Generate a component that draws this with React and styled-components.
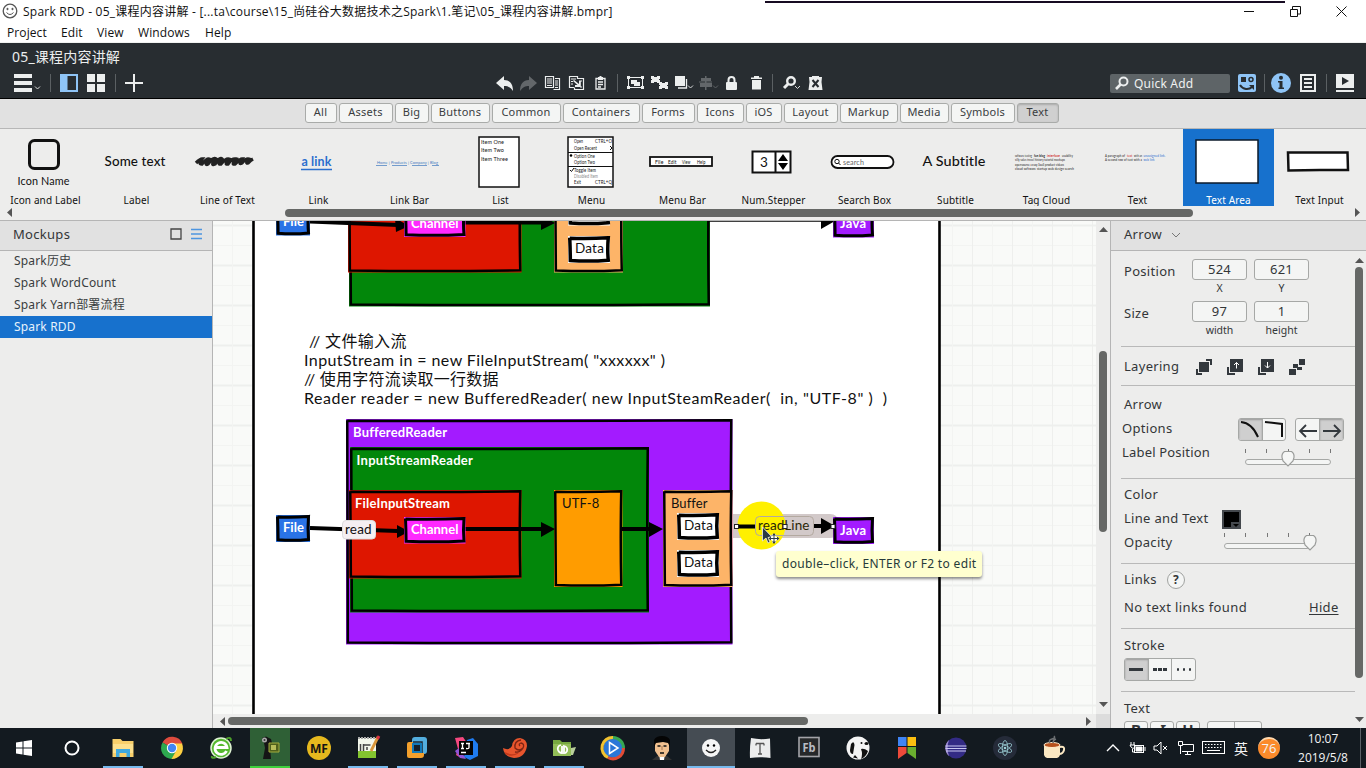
import React from "react";
import styled, { createGlobalStyle, css } from "styled-components";

const UI = `"Noto Sans", "Noto Sans CJK SC", sans-serif`;
const SEGOE = `"Open Sans", "Noto Sans CJK SC", sans-serif`;
const SKETCH = `"Lato", "Noto Sans CJK SC", sans-serif`;

const Global = createGlobalStyle`
  * { box-sizing: border-box; }
  body { margin: 0; background: #fff; overflow: hidden; }
  svg { display: block; flex: none; overflow: visible; }
`;

const Window = styled.div`
  width: 1366px;
  height: 768px;
  display: flex;
  flex-direction: column;
  overflow: hidden;
  font-family: ${UI};
  font-size: 12px;
  color: #333638;
  white-space: pre;
`;

/* ---------- window chrome ---------- */
const TitleBar = styled.header`
  position: relative;
  height: 22px;
  flex: none;
  display: flex;
  align-items: center;
  padding: 0 19px 0 2px;
  background: #fff;
  font-family: ${SEGOE};
  font-size: 12px;
  color: #111;
`;
const TitleText = styled.span`
  margin-left: 5px;
  flex: 1;
  letter-spacing: 0.23px;
`;
const TopEdge = styled.div`
  position: absolute;
  left: 765px;
  top: 1px;
  width: 520px;
  height: 2px;
  background: #170b22;
`;
const WinButtons = styled.div`
  display: flex;
  gap: 35px;
`;
const MenuBar = styled.nav`
  height: 21px;
  flex: none;
  display: flex;
  gap: 14px;
  padding-left: 7px;
  line-height: 21px;
  background: #fff;
  border-bottom: 1px solid #f0f2f0;
  font-family: ${SEGOE};
  font-size: 12px;
  letter-spacing: 0.1px;
  color: #111;
`;
const MenuItem = styled.span`
  width: ${(p) => p.$w}px;
`;

/* ---------- dark header ---------- */
const Header = styled.div`
  height: 56px;
  flex: none;
  background: #282d31;
  border-bottom: 1px solid #000;
  color: #eceeee;
`;
const ProjectName = styled.div`
  height: 29px;
  padding-left: 12px;
  line-height: 28px;
  font-size: 14px;
  letter-spacing: 0.2px;
`;
const ToolRow = styled.div`
  display: grid;
  grid-template-columns: 496px 614px 1fr;
  height: 22px;
  align-items: center;
`;
const Tools = styled.div`
  display: flex;
  align-items: center;
  padding-left: ${(p) => p.$pad || 0}px;
`;
const Slot = styled.div`
  width: ${(p) => p.$w}px;
  flex: none;
  opacity: ${(p) => (p.$dim ? 0.3 : 1)};
`;
const Sep = styled.div`
  width: 1px;
  height: 18px;
  background: #5b6063;
  margin-right: ${(p) => p.$mr}px;
`;
const QuickAdd = styled.div`
  width: 120px;
  height: 19px;
  display: flex;
  align-items: center;
  gap: 5px;
  padding-left: 5px;
  margin-right: 8px;
  border-radius: 2px;
  background: #5e6467;
  color: #f0f1f1;
  font-size: 12px;
  letter-spacing: 0.2px;
`;

/* ---------- library ---------- */
const Categories = styled.div`
  height: 30px;
  flex: none;
  display: flex;
  justify-content: center;
  gap: 2px;
  padding: 4px 2px 0 0;
  background: #e1e1e1;
  border-bottom: 1px solid #b7b7b7;
`;
const Category = styled.button`
  width: ${(p) => p.$w}px;
  height: 20px;
  padding: 0 1px 2px 0;
  border: 1px solid #a9aba9;
  border-radius: 3px;
  background: ${(p) => (p.$on ? "#d0d0d0" : "#f4f5f4")};
  box-shadow: ${(p) => (p.$on ? "inset 0 1px 2px #aaa" : "none")};
  font: 11px/16px ${UI};
  letter-spacing: 0.25px;
  color: #3a3d3f;
`;
const Library = styled.div`
  height: 77px;
  flex: none;
  display: flex;
  background: #ededec;
`;
const LibraryItem = styled.div`
  width: 91px;
  height: 77px;
  flex: none;
  display: flex;
  flex-direction: column;
  align-items: center;
  background: ${(p) => (p.$on ? "#1771cd" : "none")};
  color: ${(p) => (p.$on ? "#fff" : "#111")};
  font-size: 10px;
  line-height: 12px;
  letter-spacing: 0.12px;
`;
const Thumb = styled.div`
  height: 66px;
  display: flex;
  align-items: center;
  margin-left: -3px;
`;
const LibraryScroll = styled.div`
  height: 15px;
  flex: none;
  display: flex;
  align-items: center;
  padding: 0 6px 1px 6px;
  background: #ededec;
  border-bottom: 1px solid #b5b5b5;
`;
const Bar = styled.div`
  flex: none;
  border-radius: 4px;
  background: #666866;
  width: ${(p) => p.$w}px;
  height: ${(p) => p.$h}px;
  margin: ${(p) => p.$m || 0};
`;

/* ---------- workspace ---------- */
const Workspace = styled.div`
  height: 507px;
  flex: none;
  display: flex;
  background: #ededec;
`;
const Sidebar = styled.aside`
  width: 213px;
  border-right: 1px solid #b5b5b5;
`;
const PaneHead = styled.div`
  height: 30px;
  display: flex;
  align-items: center;
  padding: 0 10px 3px 13px;
  background: #e1e1e1;
  border-bottom: 1px solid #b5b5b5;
  font-size: 13px;
  letter-spacing: 0.3px;
  gap: 9px;
`;
const Grow = styled.span`
  flex: 1;
`;
const MockupRow = styled.div`
  height: 22px;
  margin-top: ${(p) => (p.$first ? -1 : 0)}px;
  padding-left: 14px;
  line-height: 22px;
  font-size: 12px;
  letter-spacing: 0.17px;
  background: ${(p) => (p.$on ? "#1771cd" : "none")};
  color: ${(p) => (p.$on ? "#e6f1fb" : "#3a3d40")};
`;
const CanvasPane = styled.main`
  width: 897px;
  display: grid;
  grid-template: 493px 14px / 883px 14px;
`;
const Canvas = styled.div`
  position: relative;
  overflow: hidden;
  background: #f9faf8;
`;
/* The board keeps document coordinates; the canvas shows a scrolled window of it. */
const Board = styled.div`
  position: absolute;
  left: -213px;
  top: -221px;
  width: 1366px;
  height: 768px;
`;
const Layer = styled.svg`
  position: absolute;
  left: 0;
  top: 0;
`;
const NodeBox = styled.div`
  position: absolute;
  left: ${(p) => p.$x}px;
  top: ${(p) => p.$y}px;
  width: ${(p) => p.$w}px;
  height: ${(p) => p.$h}px;
`;
const NodeText = styled.span`
  position: absolute;
  left: ${(p) => p.$x}px;
  top: ${(p) => p.$y}px;
  font: ${(p) => (p.$bold ? 700 : 400)} ${(p) => p.$size || 13}px/16px ${SKETCH};
  color: ${(p) => p.$color};
  letter-spacing: ${(p) => p.$ls || 0}px;
`;
const Code = styled.div`
  position: absolute;
  left: 304px;
  top: 331px;
  font: 16px/19px ${SKETCH};
  color: #111;
`;
const CodeLine = styled.div`
  height: 19px;
  padding-left: ${(p) => p.$in || 0}px;
  letter-spacing: ${(p) => p.$ls || 0}px;
`;
const Tip = styled.div`
  position: absolute;
  left: 776px;
  top: 551px;
  width: 206px;
  height: 26px;
  padding-left: 6px;
  border-radius: 3px;
  background: #ffffcf;
  box-shadow: 0 2px 3px rgba(0, 0, 0, 0.45);
  font-size: 12px;
  line-height: 25px;
  letter-spacing: 0.34px;
  color: #263a3a;
`;
const HScroll = styled.div`
  display: flex;
  align-items: center;
  padding: 0 7px 0 6px;
`;
const VScroll = styled.div`
  display: flex;
  flex-direction: column;
  align-items: center;
  padding: ${(p) => p.$pt ?? 4}px 0 6px 0;
`;
const PanelScroll = styled(VScroll)`
  width: 8px;
`;
const Corner = styled.div`
  background: #dcdcdc;
`;

/* ---------- inspector ---------- */
const Inspector = styled.aside`
  width: 256px;
  border-left: 1px solid #b5b5b5;
  display: flex;
  flex-direction: column;
`;
const InspectorBody = styled.div`
  flex: 1;
  min-height: 0;
  display: flex;
`;
const Props = styled.div`
  width: 244px;
  padding-left: 10px;
  overflow: hidden;
`;
const Section = styled.section`
  height: ${(p) => p.$h}px;
  padding: ${(p) => p.$pt}px 0 0 3px;
  border-bottom: 1px solid #b9b9b9;
  overflow: hidden;
`;
const Row = styled.div`
  height: ${(p) => p.$h || 24}px;
  display: flex;
  align-items: center;
`;
const Label = styled.span`
  width: ${(p) => (p.$w ? p.$w + "px" : "auto")};
  flex: none;
  padding-bottom: 2px;
  font-size: 13px;
  line-height: 20px;
  letter-spacing: ${(p) => p.$ls ?? 0.3}px;
  ${(p) => p.$out && css`margin-left: -2px;`}
  ${(p) => p.$u && css`text-decoration: underline; text-underline-offset: 2px;`}
`;
const Fields = styled.div`
  display: grid;
  grid-template: 21px 21px 21px 21px / 68px 55px 55px;
`;
const Field = styled.div`
  width: 55px;
  height: 21px;
  margin-left: ${(p) => p.$ml || 0}px;
  border: 1px solid #a6a8a6;
  border-radius: 3px;
  background: #f4f5f4;
  text-align: center;
  font-size: 13px;
  line-height: 19px;
  letter-spacing: 0.2px;
`;
const Caption = styled.div`
  width: 55px;
  margin-left: ${(p) => p.$ml || 0}px;
  text-align: center;
  font-size: 10.5px;
  line-height: 17px;
`;
const FieldLabel = styled(Label)`
  padding: 2px 0 0;
`;
const Toggle = styled.div`
  width: ${(p) => p.$w}px;
  height: ${(p) => p.$h || 23}px;
  display: flex;
  margin-left: ${(p) => p.$ml || 0}px;
  border: 1px solid #a6a8a6;
  border-radius: 3px;
  background: #f4f5f4;
  overflow: hidden;
  flex: none;
`;
const ToggleCell = styled.div`
  flex: 1;
  display: flex;
  align-items: center;
  justify-content: center;
  padding-top: ${(p) => p.$drop || 0}px;
  background: ${(p) => (p.$on ? "#cfcfcf" : "none")};
  box-shadow: ${(p) => (p.$on ? "inset 0 1px 2px #999" : "none")};
  & + & { border-left: 1px solid #a6a8a6; }
`;
const StyleCell = styled(ToggleCell)`
  align-items: flex-start;
  font-size: 15px;
  font-weight: 700;
  line-height: 15px;
  font-style: ${(p) => (p.$italic ? "italic" : "normal")};
  text-decoration: ${(p) => (p.$under ? "underline" : "none")};
`;
const SliderBox = styled.div`
  position: relative;
  width: 86px;
  height: 18px;
  margin-top: ${(p) => p.$mt || 0}px;
`;
const Ticks = styled.div`
  display: flex;
  justify-content: space-between;
  height: 10px;
`;
const Tick = styled.i`
  width: 1px;
  height: 4px;
  background: #777;
`;
const Track = styled.div`
  height: 6px;
  border: 1px solid #a6a8a6;
  border-radius: 3px;
  background: #f4f5f4;
`;
const Knob = styled.svg`
  position: absolute;
  top: 1px;
  left: ${(p) => p.$x}px;
`;
const Help = styled.div`
  width: 18px;
  height: 18px;
  margin-left: 10px;
  border: 1px solid #a0a2a0;
  border-radius: 50%;
  background: #f4f5f4;
  text-align: center;
  font-size: 12px;
  font-weight: 700;
  line-height: 15px;
`;

/* ---------- taskbar ---------- */
const Taskbar = styled.footer`
  height: 40px;
  flex: none;
  display: flex;
  background: #131a20;
`;
const Task = styled.div`
  width: ${(p) => p.$w || 49}px;
  height: 40px;
  margin-right: ${(p) => p.$mr || 0}px;
  flex: none;
  display: flex;
  justify-content: center;
`;
const TaskFace = styled.div`
  width: ${(p) => (p.$active ? 48 : 40)}px;
  display: flex;
  align-items: center;
  justify-content: center;
  background: ${(p) => (p.$bg ? p.$bg : "none")};
  border-bottom: 2px solid ${(p) => p.$line || "transparent"};
  padding-top: 2px;
`;
const Tray = styled.div`
  flex: 1;
  display: flex;
  align-items: center;
  color: #f4f4f4;
  font-family: ${SEGOE};
`;
const TrayItem = styled.div`
  margin-left: ${(p) => p.$ml}px;
  font-size: 14px;
`;
const Badge = styled.div`
  width: 22px;
  height: 22px;
  margin-left: 10px;
  border-radius: 50%;
  background: #fb8a2b;
  border-top: 2px solid #ffd9ae;
  text-align: center;
  font-size: 13px;
  line-height: 18px;
`;
const Clock = styled.div`
  width: 66px;
  height: 40px;
  margin-left: 10px;
  text-align: center;
  font-size: 12px;
  line-height: 19px;
  padding-top: 1px;
`;
const DesktopEdge = styled.div`
  width: 1px;
  height: 40px;
  margin-left: 4px;
  background: #5a6066;
`;

/* ---------- icons ---------- */
const I = ({ w = 18, h = 18, children, ...r }) => (
  <svg width={w} height={h} viewBox={`0 0 ${w} ${h}`} fill="#eceeee" {...r}>{children}</svg>
);
const Tri = ({ d, w = 9, h = 9 }) => (
  <svg width={w} height={h} viewBox={`0 0 ${w} ${h}`}><path d={d} fill="#555" /></svg>
);
const UP = "M0 7L4.5 2L9 7Z", DOWN = "M0 2L4.5 7L9 2Z", LEFT = "M6 0V9L1 4.5Z", RIGHT = "M2 0V9L7 4.5Z";
const caret = (x, y) => <path d={`M${x} ${y}l2.5 2.5l2.5-2.5`} fill="none" stroke="#d8dada" />;

const UndoPath = "M0 7L8 0V4C14 4 17 8 17 15C14 11 12 10 8 10V14Z";

const Group = ({ x, y, w, h }) => (
  <g>
    <rect x={x + 1.500} y={y + 1.500} width={w - 3} height={h - 3} fill="none" stroke="#eceeee" />
    {[[x, y], [x + w - 3, y], [x, y + h - 3], [x + w - 3, y + h - 3]].map(([a, b], i) => <rect key={i} x={a} y={b} width="3" height="3" />)}
  </g>
);

const LeftTools = () => (
  <Tools $pad={14}>
    <Slot $w={36}><I w={28}><path d="M0 0h18v4H0zM0 7h18v4H0zM0 14h18v4H0z" />{caret(21, 12.5)}</I></Slot>
    <Sep $mr={9} />
    <Slot $w={27}><I><path d="M0 0H18V18H0ZM7.5 2V16H16V2Z" fill="#8fc4f6" fillRule="evenodd" /></I></Slot>
    <Slot $w={28}><I><path d="M0 0h8v8H0zM10 0h8v8h-8zM0 10h8v8H0zM10 10h8v8h-8z" /></I></Slot>
    <Sep $mr={9} />
    <Slot $w={20}><I><path d="M8 0h2v8h8v2h-8v8H8v-8H0V8h8z" /></I></Slot>
  </Tools>
);

const CenterTools = () => (
  <Tools>
    <Slot $w={24}><I h={15}><path d={UndoPath} /></I></Slot>
    <Slot $w={25} $dim><I h={15}><path transform="translate(17 0) scale(-1 1)" d={UndoPath} /></I></Slot>
    <Slot $w={24}><I w={16} h={14}><path d="M.5.5h8v11h-8zM10 2.500h4.500v11h-6M2 3h5M2 5h5M2 7h5M2 9.500h5M10 5h3M10 7h3M10 9h3M10 11.500h3" fill="none" stroke="#eceeee" strokeWidth="1.200" /></I></Slot>
    <Slot $w={26}><I w={16} h={14}><path d="M5 11.500H.5V.5h8v2h6v11h-9v-2M2 3h5M2 5.500h2M2 8h2M10 5h3M11 11h2" fill="none" stroke="#eceeee" strokeWidth="1.200" /><path d="M5 4l5 4V5h1.800v6H6V9h2.500L4 5z" /></I></Slot>
    <Slot $w={22}><I w={12} h={14}><path d="M1 2.500h9v10.500H1zM3 6h5M3 8.500h5M3 11h3" fill="none" stroke="#eceeee" strokeWidth="1.300" /><path d="M3 1h1.500V0h2v1H8v3H3z" /></I></Slot>
    <Sep $mr={9} />
    <Slot $w={24}><I w={18} h={14}><Group x={0} y={0} w={17} h={13} /><path d="M4 4h6v2h3v4H7V8H4z" /></I></Slot>
    <Slot $w={24}><I w={18} h={14}><path d="M1.500 1.500h6v4h-6zM9.500 7.500h6v4h-6z" stroke="#eceeee" /><Group x={0} y={0} w={9} h={7} /><Group x={8} y={6} w={9} h={7} /></I></Slot>
    <Slot $w={24}><I w={20} h={14}><rect width="10" height="10" /><path d="M11.500 3v9H3" fill="none" stroke="#eceeee" strokeWidth="1.300" />{caret(13, 9.5)}</I></Slot>
    <Slot $w={27} $dim><I w={20} h={14}><path d="M6 0h1.500v2H12v3H7.500v2H13v4H7.500v3H6v-3H1V7h5V5H2V2h4z" /><path d="M0 6h13" stroke="#eceeee" />{caret(14, 9.5)}</I></Slot>
    <Slot $w={25}><I w={11} h={14}><rect y="6" width="11" height="8" rx="1" /><path d="M2.500 7V4a3 3 0 0 1 6 0v3" fill="none" stroke="#eceeee" strokeWidth="2" /></I></Slot>
    <Slot $w={21}><I w={11} h={14}><path d="M0 1.500h3V0h5v1.500h3V3H0zM1 4h9v9.500H1z" /></I></Slot>
    <Sep $mr={10} />
    <Slot $w={25}><I w={18} h={15}><circle cx="8" cy="5" r="3.800" fill="none" stroke="#eceeee" strokeWidth="2.400" /><path d="M5.500 7.500L1 12" stroke="#eceeee" strokeWidth="3" />{caret(12, 10)}</I></Slot>
    <Slot $w={16}><I w={15} h={14}><path d="M1 1h3V0h7v1h3L13.500 6l1 8H.500l1-8z" /><path d="M4.500 4l6 7M10.500 4l-6 7" stroke="#282d31" strokeWidth="2" /></I></Slot>
  </Tools>
);

const RightTools = () => (
  <Tools>
    <QuickAdd>
      <I w={14} h={14}><circle cx="8.500" cy="5.500" r="4" fill="none" stroke="#eceeee" strokeWidth="2" /><path d="M5.500 8.500L1 13" stroke="#eceeee" strokeWidth="2.600" /></I>
      Quick Add
    </QuickAdd>
    <Slot $w={26}><I><rect width="18" height="18" rx="2" fill="#8fc4f6" /><rect x="3" y="3" width="5" height="5" fill="#282d31" /><circle cx="13" cy="5.500" r="2" fill="none" stroke="#282d31" strokeWidth="1.500" /><path d="M2 11C5 16 11 16 14 13" fill="none" stroke="#282d31" strokeWidth="2" /><path d="M11 11h5v5z" fill="#282d31" /></I></Slot>
    <Sep $mr={6} />
    <Slot $w={29}><I w={20} h={20}><circle cx="10" cy="10" r="10" fill="#8fc4f6" /><circle cx="10" cy="4.800" r="2" fill="#282d31" /><path d="M7 8h4.500v6.500H13V16H7.500v-1.500H8.500V9.500H7z" fill="#282d31" /></I></Slot>
    <Slot $w={26}><I w={16}><path fillRule="evenodd" d="M0 0h16v18H0zM2 2v14h12V2z" /><path d="M4 4h8v2H4zM4 8h8v2H4zM4 12h8v2H4z" /></I></Slot>
    <Sep $mr={9} />
    <I><path d="M0 0h18v14H0zM0 16h18v2H0z" /><path d="M6 3v8l7-4z" fill="#282d31" /></I>
  </Tools>
);

/* ---------- library thumbnails ---------- */
const T = ({ x, y, s, w, c = "#111", b, children }) => (
  <text x={x} y={y} fontSize={s} textLength={w} lengthAdjust="spacingAndGlyphs" fill={c} fontWeight={b || 400} fontFamily="Lato, sans-serif">{children}</text>
);
const scribble = "M2 8q4-4 6-4q-4 5 0 5q5-6 7-5q-5 7-1 5q5-7 8-5q-6 7-1 5q5-7 7-5q-5 6-1 5q5-6 8-5q-5 6-1 5q4-6 8-5q-5 6-1 5q5-5 7-5q-4 6 0 4q4-5 7-4q-4 5-1 4q3-3 5-4";
const thumbs = {
  "Icon and Label": <svg width="56" height="50"><rect x="13.500" y="3.500" width="29" height="28" rx="5" fill="none" stroke="#111" strokeWidth="3" /><T x={1.5} y={48} s={11} w={52}>Icon Name</T></svg>,
  Label: <svg width="62" height="20"><T x={0.5} y={14} s={13} w={61} b={500}>Some text</T></svg>,
  "Line of Text": <svg width="64" height="14"><path d={scribble} fill="none" stroke="#222" strokeWidth="3.400" /></svg>,
  Link: <svg width="32" height="20"><T x={0.5} y={14} s={13} w={30} c="#2a6fce" b={700}>a link</T><path d="M0 17.500H31" stroke="#2a6fce" strokeWidth="1.500" /></svg>,
  "Link Bar": <svg width="64" height="8"><T x={1} y={6} s={4.5} w={61} c="#3d78c0">Home | Products | Company | Blog</T><path d="M0 7.500h11M16 7.500h15M36 7.500h15M56 7.500h7" stroke="#3d78c0" strokeWidth=".7" /></svg>,
  List: <svg width="42" height="52"><rect x="1" y="1" width="40" height="50" fill="#fff" stroke="#111" strokeWidth="1.500" /><T x={3} y={7.500} s={6} w={23}>Item One</T><T x={3} y={16} s={6} w={23}>Item Two</T><T x={3} y={24.500} s={6} w={27}>Item Three</T></svg>,
  Menu: <svg width="47" height="52"><rect x="1" y="1" width="45" height="50" fill="#fff" stroke="#111" strokeWidth="1.500" /><T x={7} y={7} s={5} w={9}>Open</T><T x={28} y={7} s={5} w={17}>CTRL+O</T><T x={7} y={13.5} s={5} w={23}>Open Recent</T><path d="M43 10l2 2-2 2" fill="none" stroke="#111" /><path d="M1 16.500h45M1 30.500h45" stroke="#111" /><circle cx="4" cy="19.500" r="1.300" /><T x={7} y={21.5} s={5} w={21}>Option One</T><T x={7} y={28} s={5} w={21}>Option Two</T><path d="M3 34l1.500 1.500L7 32" fill="none" stroke="#111" /><T x={7} y={36} s={5} w={22}>Toggle Item</T><T x={7} y={42} s={5} w={24} c="#888">Disabled Item</T><T x={7} y={48} s={5} w={7}>Exit</T><T x={28} y={48} s={5} w={17}>CTRL+Q</T></svg>,
  "Menu Bar": <svg width="64" height="12"><rect x="1" y="1" width="62" height="9" fill="#fff" stroke="#111" strokeWidth="1.800" />{[["File", 6], ["Edit", 19], ["View", 33], ["Help", 48]].map(([t, x]) => <T key={t} x={x} y={7.5} s={5.5} w={8.5}>{t}</T>)}</svg>,
  "Num.Stepper": <svg width="42" height="24"><rect x="1.500" y="1.500" width="38" height="21" fill="#fff" stroke="#111" strokeWidth="2" /><path d="M24.500 1v22" stroke="#111" strokeWidth="2" /><T x={9} y={16.5} s={14} w={8}>3</T><path d="M27 11l5-7 5 7zM27 13h10l-5 7z" fill="#000" /></svg>,
  "Search Box": <svg width="66" height="16"><rect x="1.500" y="2" width="62" height="12" rx="6" fill="#fff" stroke="#111" strokeWidth="1.800" /><circle cx="7" cy="7.500" r="2.200" fill="none" stroke="#111" /><path d="M8.500 9l2 2" stroke="#111" /><T x={13} y={10.5} s={7.5} w={21} c="#666">search</T></svg>,
  Subtitle: <svg width="64" height="20"><T x={0.5} y={14} s={13} w={63} b={500}>A Subtitle</T></svg>,
  "Tag Cloud": <svg width="60" height="18"><T x={0} y={3.500} s={3.300} w={17}>software testing</T><T x={19} y={3.500} s={3.500} w={11} b={700}>fun blog</T><T x={32} y={3.500} s={3.500} w={13} c="#c22" b={700}>interface</T><T x={47} y={3.500} s={3.300} w={11}>usability</T><T x={0} y={8} s={3.500} w={50}>silly sales travel history tutorial mockups</T><T x={0} y={12.500} s={3.500} w={49}>opensource essay SaaS product videos</T><T x={0} y={17} s={3.500} w={59}>cloud software startup web design search</T></svg>,
  Text: <svg width="62" height="22"><T x={0} y={6} s={3} w={20}>A paragraph of</T><T x={22} y={6} s={3} w={5.500} c="#c22">text</T><T x={29} y={6} s={3} w={8}>with an</T><T x={38.500} y={6} s={3} w={22} c="#26c">unassigned link.</T><T x={0} y={10} s={3} w={37}>A second row of text with a</T><T x={38.500} y={10} s={3} w={11} c="#26c">web link</T></svg>,
  "Text Area": <svg width="64" height="45"><rect x="1" y="1" width="62" height="43" fill="#fff" stroke="#0b1a2b" strokeWidth="1.500" /></svg>,
  "Text Input": <svg width="64" height="23"><path d="M2 2.500L31 2.500L61.500 2.500L62 20L34 20L2.500 20.500Z" fill="#fff" stroke="#111" strokeWidth="2.500" /></svg>,
};

/* ---------- diagram ---------- */
/** A hand-drawn style box: the outline bows very slightly on each side. */
const Node = ({ x, y, w, h, fill, sw = 2.5, label, lx = 0, ly = 0, color = "#fff", bold = true, size, ls }) => (
  <NodeBox $x={x} $y={y} $w={w} $h={h}>
    <svg width={w} height={h}>
      <rect width={w} height={h} fill={fill} />
      <path d={`M${sw / 2} ${sw / 2 + 0.5}Q${w / 2} ${sw / 2 + 1.2} ${w - sw / 2} ${sw / 2}Q${w - sw / 2 - 1} ${h / 2} ${w - sw / 2} ${h - sw / 2 - 1}Q${w / 2} ${h - sw / 2 + 0.6} ${sw / 2 + 0.6} ${h - sw / 2 - 0.8}Q${sw / 2 + 0.5} ${h / 2} ${sw / 2} ${sw / 2}Z`} fill={fill} stroke="#000" strokeWidth={sw} />
    </svg>
    {label && <NodeText $x={lx} $y={ly} $color={color} $bold={bold} $size={size} $ls={ls}>{label}</NodeText>}
  </NodeBox>
);

const Diagram = () => (
  <Board>
    <Layer width="1366" height="768">
      {Array.from({ length: 26 }, (_, i) => <path key={i} d={`M213 ${225.5 + i * 20}H1096`} stroke={i % 2 ? "#f3f4f2" : "#eeefed"} strokeWidth={i % 2 ? 1 : 2} />)}
      {Array.from({ length: 45 }, (_, i) => <path key={i} d={`M${232.5 + i * 20} 221V714`} stroke={i % 2 ? "#eeefed" : "#f3f4f2"} strokeWidth="1" />)}
      <rect x="254" y="200" width="685" height="560" fill="#fff" />
      <path d="M253.500 200V760M939.500 200V760" stroke="#000" strokeWidth="2.600" />
    </Layer>

    <Node x={349} y={180} w={361} h={126.500} fill="#02870a" />
    <Node x={348} y={184} w={173.500} h={88.500} fill="#de1600" />
    <Node x={554} y={178} w={69} h={94.500} fill="#fdb468" />
    <Node x={568} y={198} w={42} h={27.500} fill="#fff" sw={3.500} />
    <Node x={568} y={236} w={42} h={27} fill="#fff" sw={3.500} label="Data" lx={7} ly={4} color="#111" bold={false} size={13.5} ls={0.2} />
    <Layer width="1366" height="768">
      <g stroke="#000" strokeWidth="4"><path d="M310 221.500L398 225M465 222.500H545" /><path d="M709 220H830" strokeWidth="3.500" /></g>
      <path d="M395 218L409 226L396 232ZM541 215L555 223L541 230ZM821 213L835 221L821 229Z" />
    </Layer>
    <Node x={276} y={209} w={34} h={26.500} fill="#2a73e6" sw={3} label="File" lx={7} ly={4} size={13} />
    <Node x={404} y={210} w={61.500} h={27} fill="#ff28ff" sw={3} label="Channel" lx={7} ly={5} size={13} />
    <Node x={833} y={210} w={41} h={27.500} fill="#a31bff" sw={3} label="Java" lx={7} ly={5} size={13} ls={0.3} />

    <Code>
      <CodeLine $in={5} $ls={0.35}>// 文件输入流</CodeLine>
      <CodeLine $ls={0.42}>{'InputStream in = new FileInputStream( "xxxxxx" )'}</CodeLine>
      <CodeLine $ls={0.27}>// 使用字符流读取一行数据</CodeLine>
      <CodeLine $ls={0.56}>{'Reader reader = new BufferedReader( new InputSteamReader(  in, "UTF-8" )  )'}</CodeLine>
    </Code>

    <Node x={346} y={419} w={386.500} h={225.500} fill="#a31bff" label="BufferedReader" lx={7} ly={5} size={13} ls={0.2} />
    <Node x={349.500} y={447} w={299} h={165.500} fill="#02870a" label="InputStreamReader" lx={7} ly={5} size={13} ls={0.28} />
    <Node x={349} y={490} w={172.500} h={88.500} fill="#de1600" label="FileInputStream" lx={6} ly={5} size={13} ls={0.2} />
    <Node x={554} y={490} w={68.500} h={97} fill="#ff9c00" label="UTF-8" lx={8} ly={5} color="#111" bold={false} size={13} ls={0.1} />
    <Node x={663} y={490} w={69.500} h={97} fill="#fdb468" label="Buffer" lx={8} ly={5} color="#111" bold={false} size={13} ls={0.1} />
    <Node x={677} y={513} w={42} h={27} fill="#fff" sw={3.500} label="Data" lx={7} ly={4} color="#111" bold={false} size={13.500} ls={0.2} />
    <Node x={677} y={550} w={42} h={27} fill="#fff" sw={3.500} label="Data" lx={7} ly={4} color="#111" bold={false} size={13.500} ls={0.2} />
    <Layer width="1366" height="768">
      <path d="M733 514H830Q838 514 838 522V530Q838 538 830 538H733Z" fill="#d2c9c9" />
      <circle cx="761.500" cy="525.500" r="24" fill="#fff000" />
      <g stroke="#000" strokeWidth="4">
        <path d="M310 528L398 531M465 529H545M622 529H652M738 526.500H755M814 526H826" />
      </g>
      <path d="M397 525L409 531.500L397 538ZM541 522L555 529L541 537ZM649 522L663 529L649 537ZM821 518L835 526L821 534Z" />
      <rect x="342.500" y="520.500" width="33" height="18.500" rx="3.500" fill="#f4eff2" stroke="#ddd" />
      <rect x="755.500" y="516.500" width="58" height="19" rx="4" fill="none" stroke="#b3a9a0" />
    </Layer>
    <Node x={276} y={515} w={34} h={27} fill="#2a73e6" sw={3} label="File" lx={7} ly={4} size={13} />
    <Node x={404} y={517} w={61.500} h={26.500} fill="#ff28ff" sw={3} label="Channel" lx={7} ly={4} size={13} />
    <Node x={833} y={517} w={41} h={27} fill="#a31bff" sw={3} label="Java" lx={7} ly={5} size={13} ls={0.3} />
    <NodeText $x={345} $y={521} $color="#111" $size={13.500} $ls={0.2}>read</NodeText>
    <NodeText $x={758} $y={517} $color="#2a2608" $size={13.500} $ls={0.1}>readLine</NodeText>
    <Layer width="1366" height="768">
      {[736.5, 785, 833].map((x) => <rect key={x} x={x - 2} y="524.500" width="4" height="4" fill="#fff" stroke="#222" />)}
      <path d="M762.500 527V541L766 538L768 543L770 542L768 537.500L772 537Z" fill="#2c3a44" stroke="#eee" strokeWidth=".8" />
      <g stroke="#fff" strokeWidth="3.500"><path d="M774 534V543M769.500 538.500H778.500" /></g>
      <path d="M774 533l2 2.500h-4zM774 544l2-2.500h-4zM768.500 538.500l2.500-2v4zM779.500 538.500l-2.500-2v4z" fill="#2c3a44" />
      <path d="M774 534V543M769.500 538.500H778.500" stroke="#2c3a44" />
    </Layer>
    <Tip>double–click, ENTER or F2 to edit</Tip>
  </Board>
);

const Slider = ({ mt, at }) => (
  <SliderBox $mt={mt}>
    <Ticks>{[0, 1, 2, 3, 4].map((i) => <Tick key={i} />)}</Ticks>
    <Track />
    <Knob $x={at} width="15" height="18"><path d="M3.500 1.500H10.500Q13.500 3.500 13 7.500L12 11L7 16L2 11L1 7.500Q.5 3.500 3.500 1.500Z" fill="#f5f6f5" stroke="#9a9c9a" strokeWidth="1.200" /></Knob>
  </SliderBox>
);

const layers = [
  <g key="a"><rect x="3" y="3" width="10" height="10" /><path d="M10 0h6v6h-2V2h-4zM0 10h2v4h4v2H0z" /></g>,
  <g key="b"><rect x="3" width="13" height="13" /><path d="M0 8h2v6h6v2H0z" /><path d="M9.500 9.500V3.500M7 6L9.500 3.500L12 6" stroke="#fff" fill="none" /></g>,
  <g key="c"><rect x="3" width="13" height="13" /><path d="M0 8h2v6h6v2H0z" /><path d="M9.500 3V9M7 6.500L9.500 9L12 6.500" stroke="#fff" fill="none" /></g>,
  <g key="d"><path d="M10 0h6v6h-6zM0 10h7v6H0zM4 5h5v3h4v3H8V9H4z" /></g>,
];

/* ---------- taskbar icons ---------- */
const S = (children, w = 24) => <svg width={w} height="24" viewBox="0 0 24 24">{children}</svg>;
const BLUE = "#76b9ed";
const tasks = [
  { w: 48, icon: S(<path d="M4 6.500l6.500-1v6H4zM11.500 5.300L20 4v7.500h-8.500zM4 12.500h6.500v6L4 17.500zM11.500 12.500H20V20l-8.500-1.200z" fill="#fff" />) },
  { w: 48, mr: 2, icon: S(<circle cx="12" cy="12" r="6.500" fill="none" stroke="#fff" strokeWidth="2" />) },
  { line: BLUE, icon: S(<g><path d="M1.500 3h8l2 2h11v16h-21z" fill="#f7cf6b" /><path d="M2 8h20v9H2z" fill="#fce08d" /><path d="M5 13h14v8h-3.500v-4h-7v4H5z" fill="#3fa9e0" /></g>) },
  { icon: S(<g><path d="M12 12L2.500 6.500A11 11 0 0 1 22.500 8Z" fill="#dd4b3e" /><path d="M12 12L2.500 6.500A11 11 0 0 0 12 23L16 15z" fill="#2da94f" /><path d="M12 7.500L22 7.500A11 11 0 0 1 11.500 23L16.500 14z" fill="#fdd043" /><circle cx="12" cy="12" r="5.200" fill="#fff" /><circle cx="12" cy="12" r="4.200" fill="#4285f4" /></g>) },
  { icon: S(<g><circle cx="12" cy="12" r="10" fill="#55b92f" stroke="#dff3d4" strokeWidth="1.500" /><path d="M17.500 15A6 6 0 1 1 18 11.500H7.500" fill="none" stroke="#fff" strokeWidth="2.800" /><path d="M3 20Q2 23 7 21M17 3Q22 0 22 5" fill="none" stroke="#4c9f2a" strokeWidth="2" /></g>) },
  { bg: "#2f6036", line: "#3fd03c", icon: S(<g><path d="M4 2l4-1.500L13 3l1 4-2 4 1 12H5l2-11-1-5z" fill="#151515" /><circle cx="6.500" cy="4" r="2.500" fill="#aaa" /><circle cx="6.500" cy="4" r="1" fill="#333" /><path d="M11 7h10v9H11z" fill="#50601c" stroke="#a3ad3f" /><path d="M13 9h5v5h-5z" fill="#b8bd5a" /></g>) },
  { icon: S(<g><circle cx="12" cy="12" r="12" fill="#e6b91e" /><text x="3" y="16.500" fontSize="13" fontWeight="700" textLength="18" lengthAdjust="spacingAndGlyphs" fontFamily="Open Sans, sans-serif" fill="#141414">MF</text></g>) },
  { line: BLUE, icon: S(<g><path d="M2 2h18v20H2z" fill="#f3f7ec" /><path d="M2 15h18v7H2z" fill="#83c52f" /><path d="M4.500 8v7M7.500 8v7M7.500 9h7M11 11v3" stroke="#444" strokeWidth="1.500" fill="none" /><path d="M2 2h18" stroke="#aaa" strokeDasharray="2 1" strokeWidth="2" /><path d="M22 1L15 15" stroke="#d8963a" strokeWidth="2.800" /><path d="M23 0l-1.500 3" stroke="#d34" strokeWidth="2.800" /></g>) },
  { line: BLUE, icon: S(<g><rect x="7" y="1" width="15" height="17" rx="3" fill="#53aede" /><path d="M2 8q0-2 2-2h4v11h11v2q0 3-3 3H4q-2 0-2-2z" fill="#f3a02c" /><path d="M8 6h9v11" stroke="#1e2a34" strokeWidth="1.500" fill="none" /><rect x="8" y="8" width="8" height="8" fill="#162029" stroke="#1179b8" strokeWidth="2" /></g>) },
  { line: BLUE, icon: S(<g><path d="M1 2l8-1 4 6-6 15-5-3 2-6z" fill="#f5487f" /><path d="M13 4l6-2 5 6v12l-8 4-6-3z" fill="#1f7cf0" /><path d="M1 15l4-3 7 11-6-1z" fill="#9055d8" /><rect x="5" y="5" width="14" height="14" fill="#050505" /><path d="M7 7.500h3M8.500 7.500v5M7 12.500h3M12 7.500h4M15 7.500v4q0 1.500-3 1M7 16.500h5" stroke="#fff" strokeWidth="1.300" fill="none" /></g>) },
  { line: BLUE, icon: S(<g><path d="M0 12Q6 15 9 10Q10 2 17 2Q24 3 24 10Q22 22 11 22Q1 21 0 12Z" fill="#e8552d" /><path d="M2 17Q9 21 15 17" fill="none" stroke="#c43a1c" strokeWidth="1.500" /><path d="M17 10q-2-2 1-3q4 1 2 5q-4 4-8 0q-1-7 6-8M20 12q-3 5-8 4" fill="none" stroke="#7d2413" strokeWidth="1.300" /></g>) },
  { line: BLUE, icon: S(<g><path d="M1 4h7l2 2h9v14H1z" fill="#77a840" /><path d="M1 8h18v12H1z" fill="#92bd58" /><path d="M9 9q-4 1-3 5q1 3 4 3V10M12 18V10q4 1 3 5q-1 2-2 2" fill="none" stroke="#fff" strokeWidth="1.800" /><path d="M19 12l5-1-3 8h-2z" fill="#b9cf9a" /></g>) },
  { icon: S(<g><circle cx="12" cy="12" r="10" fill="#2b77d8" /><path d="M12 1.500A10.500 10.500 0 0 0 7 21.500" fill="none" stroke="#f2c230" strokeWidth="3" /><path d="M12 1.500A10.500 10.500 0 0 1 22.500 12" fill="none" stroke="#36a853" strokeWidth="3" /><path d="M22.500 12A10.500 10.500 0 0 1 7 21.500" fill="none" stroke="#e14b35" strokeWidth="3" /><path d="M8.500 6.500L17 12L8.500 17.500Z" fill="#2b77d8" stroke="#fff" strokeWidth="1.500" /></g>) },
  { icon: S(<g><path d="M2 24l5-4h10l5 4z" fill="#333" /><path d="M9 18h6l-1 6h-4z" fill="#fff" /><path d="M5 5h14v10l-4 6H9l-4-6z" fill="#f1c08f" /><path d="M4 11V4q2-4 8-4t8 4v7l-2-4-5-1-7 1z" fill="#050505" /><path d="M7.500 10h3M13.500 10h3M10 17h4" stroke="#111" strokeWidth="1.600" /><path d="M12 10v4" stroke="#a87950" /></g>) },
  { active: true, bg: "#454c53", line: BLUE, icon: S(<g><circle cx="12" cy="12" r="9" fill="#f5f5f5" /><circle cx="9" cy="9.500" r="1.200" /><circle cx="15" cy="9.500" r="1.200" /><path d="M7 14q5 5 10 0" fill="none" stroke="#222" strokeWidth="1.300" /></g>) },
  { icon: S(<g><path d="M3 2Q12 4 22 2.500L22.500 22Q12 20.500 2 22Q1.500 12 3 2Z" fill="#eceded" /><path d="M8 7.500h8M12 7.500V18M10 18h4M8 7.500v2M16 7.500v2" stroke="#555" fill="none" strokeWidth="1.300" /></g>) },
  { icon: S(<g><rect x="2" y="1.500" width="20" height="19" fill="#26282a" stroke="#a3a3a8" strokeWidth="1.600" /><text x="5.500" y="15.500" fontSize="12" fontWeight="700" textLength="13" lengthAdjust="spacingAndGlyphs" fontFamily="Open Sans, sans-serif" fill="#b9bcc4">Fb</text></g>) },
  { icon: S(<g><circle cx="12" cy="12" r="11.500" fill="#f4f4f4" /><path d="M5 8Q8 4 8.500 9L7 18Q4 18 4 14ZM15 13Q18 12 22 15Q20 21 15 23Q17 18 15 13ZM9 19l3 3.500-5-1z" fill="#111" /><ellipse cx="20.500" cy="7.500" rx="2" ry="1.500" fill="#111" /><circle cx="15.500" cy="7" r="1" fill="#111" /></g>) },
  { icon: S(<g><path d="M3 1h8.500v9H3z" fill="#4085f5" /><path d="M12.500 1H21v9h-8.500z" fill="#fcbf10" /><path d="M3 11h8.500v6L3 23z" fill="#ee4a3a" /><path d="M12.500 11H21v12l-8.500-6z" fill="#6aae2f" /></g>) },
  { icon: S(<g><circle cx="12" cy="12" r="10.500" fill="#332b85" /><path d="M5 4A10.500 10.500 0 0 0 5 20Q2 12 5 4Z" fill="#9c8ad0" /><path d="M1.500 10h21M1.500 12.500h21M2 15h20" stroke="#c9c7f2" strokeWidth="1.200" /></g>) },
  { icon: S(<g><circle cx="12" cy="12" r="12" fill="#252b39" /><g fill="none" stroke="#9ccfd6" strokeWidth=".8"><ellipse cx="12" cy="12" rx="7.500" ry="2.700" transform="rotate(30 12 12)" /><ellipse cx="12" cy="12" rx="7.500" ry="2.700" transform="rotate(-30 12 12)" /><ellipse cx="12" cy="12" rx="7.500" ry="2.700" transform="rotate(90 12 12)" /></g><circle cx="12" cy="12" r="1.300" fill="#9ccfd6" /></g>) },
  { icon: S(<g><path d="M2 9h16v10q-1 3-3 3H5q-2 0-3-3z" fill="#fbe8c3" /><path d="M18 11q5-1 4 3t-5 4" fill="none" stroke="#fbe8c3" strokeWidth="2" /><ellipse cx="10" cy="9" rx="8" ry="2.500" fill="#b5501d" stroke="#ffeccc" /><path d="M8 7q-2-3 2-4t2-3M11 7q0-3 3-4" stroke="#6d7073" fill="none" strokeWidth="1.500" /></g>) },
];

const categories = [["All", 32], ["Assets", 54], ["Big", 34], ["Buttons", 59], ["Common", 69], ["Containers", 77], ["Forms", 53], ["Icons", 47], ["iOS", 36], ["Layout", 54], ["Markup", 58], ["Media", 49], ["Symbols", 64], ["Text", 42]];

export default function App() {
  return (
    <Window>
      <Global />
      <TitleBar>
        <svg width="16" height="16" fill="none" stroke="#555"><circle cx="8" cy="8" r="6.800" strokeWidth="1.300" /><path d="M4.500 9.500q3.500 4 7 0" /><circle cx="5.500" cy="6" r=".7" fill="#333" /><circle cx="10.500" cy="6" r=".7" fill="#333" /></svg>
        <TitleText>{"Spark RDD - 05_课程内容讲解 - [...ta\\course\\15_尚硅谷大数据技术之Spark\\1.笔记\\05_课程内容讲解.bmpr]"}</TitleText>
        <WinButtons>
          <svg width="11" height="11"><path d="M0 5.500h10" stroke="#111" /></svg>
          <svg width="11" height="11" fill="none" stroke="#111"><path d="M.5 3.500h7v7h-7zM2.500 3V.5h8v7.500H8" /></svg>
          <svg width="11" height="11" stroke="#111"><path d="M.5.5l10 10M10.500.5l-10 10" /></svg>
        </WinButtons>
        <TopEdge />
      </TitleBar>
      <MenuBar>
        <MenuItem $w={40}>Project</MenuItem>
        <MenuItem $w={22}>Edit</MenuItem>
        <MenuItem $w={27}>View</MenuItem>
        <MenuItem $w={53}>Windows</MenuItem>
        <MenuItem $w={27}>Help</MenuItem>
      </MenuBar>

      <Header>
        <ProjectName>05_课程内容讲解</ProjectName>
        <ToolRow>
          <LeftTools />
          <CenterTools />
          <RightTools />
        </ToolRow>
      </Header>

      <Categories>
        {categories.map(([name, w]) => <Category key={name} $w={w} $on={name === "Text"}>{name}</Category>)}
      </Categories>
      <Library>
        {Object.entries(thumbs).map(([name, art]) => (
          <LibraryItem key={name} $on={name === "Text Area"}><Thumb>{art}</Thumb>{name}</LibraryItem>
        ))}
      </Library>
      <LibraryScroll>
        <Tri d={LEFT} />
        <Bar $w={908} $h={8} $m="0 160px 0 270px" />
        <Tri d={RIGHT} />
      </LibraryScroll>

      <Workspace>
        <Sidebar>
          <PaneHead>
            Mockups<Grow />
            <svg width="12" height="12"><path d="M1 1h10v10H1z" fill="none" stroke="#444" strokeWidth="1.300" /></svg>
            <svg width="11" height="12"><path d="M0 1.500h11M0 6h11M0 10.500h11" stroke="#4d95e0" strokeWidth="1.300" /></svg>
          </PaneHead>
          <MockupRow $first>Spark历史</MockupRow>
          <MockupRow>Spark WordCount</MockupRow>
          <MockupRow>Spark Yarn部署流程</MockupRow>
          <MockupRow $on>Spark RDD</MockupRow>
        </Sidebar>

        <CanvasPane>
          <Canvas><Diagram /></Canvas>
          <VScroll>
            <Tri d={UP} />
            <Bar $w={8} $h={181} $m="117px 0 168px 0" />
            <Tri d={DOWN} />
          </VScroll>
          <HScroll>
            <Tri d={LEFT} />
            <Bar $w={580} $h={8} $m="0 276px 0 0" />
            <Tri d={RIGHT} />
          </HScroll>
          <Corner />
        </CanvasPane>

        <Inspector>
          <PaneHead>Arrow<svg width="10" height="4"><path d="M1 1l4 4 4-4" fill="none" stroke="#777" /></svg></PaneHead>
          <InspectorBody>
            <Props>
              <Section $h={96} $pt={8}>
                <Fields>
                  <FieldLabel>Position</FieldLabel><Field>524</Field><Field $ml={7}>621</Field>
                  <span /><Caption>X</Caption><Caption $ml={7}>Y</Caption>
                  <FieldLabel>Size</FieldLabel><Field>97</Field><Field $ml={7}>1</Field>
                  <span /><Caption>width</Caption><Caption $ml={7}>height</Caption>
                </Fields>
              </Section>
              <Section $h={39} $pt={8}>
                <Row><Label $w={72}>Layering</Label>
                  {layers.map((g, i) => <Slot key={i} $w={31}><svg width="16" height="16" fill="#33383d">{g}</svg></Slot>)}
                </Row>
              </Section>
              <Section $h={93} $pt={7}>
                <Row>
                  <Label>Arrow</Label>
                </Row>
                <Row><Label $w={116} $out>Options</Label>
                  <Toggle $w={48}>
                    <ToggleCell $on><svg width="20" height="18"><path d="M1 2Q12 3 18 17" fill="none" stroke="#111" strokeWidth="2" /></svg></ToggleCell>
                    <ToggleCell><svg width="20" height="18"><path d="M1 2L18 4V17" fill="none" stroke="#111" strokeWidth="2" /></svg></ToggleCell>
                  </Toggle>
                  <Toggle $w={49} $ml={9}>
                    <ToggleCell $drop={3}><svg width="20" height="16"><path d="M19 8H2M8 2L2 8L8 14" fill="none" stroke="#33383d" strokeWidth="1.800" /></svg></ToggleCell>
                    <ToggleCell $on $drop={3}><svg width="20" height="16"><path d="M1 8H18M12 2L18 8L12 14" fill="none" stroke="#33383d" strokeWidth="1.800" /></svg></ToggleCell>
                  </Toggle>
                </Row>
                <Row><Label $w={123} $out $ls={0.18}>Label Position</Label><Slider mt={10} at={36} /></Row>
              </Section>
              <Section $h={85} $pt={4}>
                <Row><Label>Color</Label></Row>
                <Row><Label $w={98}>Line and Text</Label><svg width="19" height="19"><rect x="1" y="1" width="17" height="17" stroke="#44484d" strokeWidth="2" /><path d="M9 12h9v6H9z" fill="#44484d" /><path d="M11 14h6l-3 3z" /></svg></Row>
                <Row><Label $w={100}>Opacity</Label><Slider mt={-3} at={79} /></Row>
              </Section>
              <Section $h={65} $pt={4}>
                <Row><Label>Links</Label><Help>?</Help></Row>
                <Row $h={32}><Label $w={185} $ls={0.4}>No text links found</Label><Label $u>Hide</Label></Row>
              </Section>
              <Section $h={63} $pt={4}>
                <Row $h={25}><Label>Stroke</Label></Row>
                <Toggle $w={72}>
                  <ToggleCell $on><svg width="14" height="3"><path d="M0 1.500h14" stroke="#33383d" strokeWidth="3" /></svg></ToggleCell>
                  <ToggleCell><svg width="14" height="3"><path d="M0 1.500h4M5 1.500h4M10 1.500h4" stroke="#33383d" strokeWidth="3" /></svg></ToggleCell>
                  <ToggleCell><svg width="14" height="3"><path d="M0 1.500h2M6 1.500h2M12 1.500h2" stroke="#33383d" strokeWidth="2.500" /></svg></ToggleCell>
                </Toggle>
              </Section>
              <Section $h={50} $pt={4}>
                <Row $h={25}><Label>Text</Label></Row>
                <Row $h={23}>
                  <Toggle $w={24}><StyleCell>B</StyleCell></Toggle>
                  <Toggle $w={24} $ml={2}><StyleCell $italic>I</StyleCell></Toggle>
                  <Toggle $w={24} $ml={2}><StyleCell $under>U</StyleCell></Toggle>
                  <Toggle $w={55} $ml={7}><ToggleCell /><ToggleCell /></Toggle>
                </Row>
              </Section>
            </Props>
            <PanelScroll $pt={5}>
              <Tri d={UP} />
              <Bar $w={8} $h={411} $m="2px 0 37px 0" />
              <Tri d={DOWN} />
            </PanelScroll>
          </InspectorBody>
        </Inspector>
      </Workspace>

      <Taskbar>
        {tasks.map((t, i) => (
          <Task key={i} $w={t.w} $mr={t.mr}><TaskFace $active={t.active} $bg={t.bg} $line={t.line}>{t.icon}</TaskFace></Task>
        ))}
        <Tray>
          <TrayItem $ml={28}><svg width="14" height="8"><path d="M1 7l6-6 6 6" fill="none" stroke="#fff" strokeWidth="1.400" /></svg></TrayItem>
          <TrayItem $ml={9}><svg width="18" height="14" fill="none" stroke="#fff"><rect x="5.500" y="4.500" width="9" height="7" /><path d="M7 6h6v4H7z" fill="#fff" /><path d="M16 6v4M1 4h5v2q-2 3-4 0zM2 1v3M5 1v3M3.500 8v3h2" /></svg></TrayItem>
          <TrayItem $ml={6}><svg width="16" height="14" fill="none" stroke="#fff"><path d="M1 5h3l4-4v12l-4-4H1zM10 5l4 4M14 5l-4 4" /></svg></TrayItem>
          <TrayItem $ml={8}><svg width="18" height="14" fill="none" stroke="#fff"><path d="M5 3.500H16.500V10.500H5M8 13.500h6M10.500 11v2M1.500.5h4v4h-4zM3.500 5v8" /></svg></TrayItem>
          <TrayItem $ml={7}><svg width="23" height="14" fill="none" stroke="#fff"><rect x=".5" y=".5" width="22" height="12" /><path d="M3 3.500h17M3 6.500h17" strokeDasharray="1.500 1.500" /><path d="M5 9.500h13" /></svg></TrayItem>
          <TrayItem $ml={9}>英</TrayItem>
          <Badge>76</Badge>
          <Clock>{"10:07\n2019/5/8"}</Clock>
          <DesktopEdge />
        </Tray>
      </Taskbar>
    </Window>
  );
}
